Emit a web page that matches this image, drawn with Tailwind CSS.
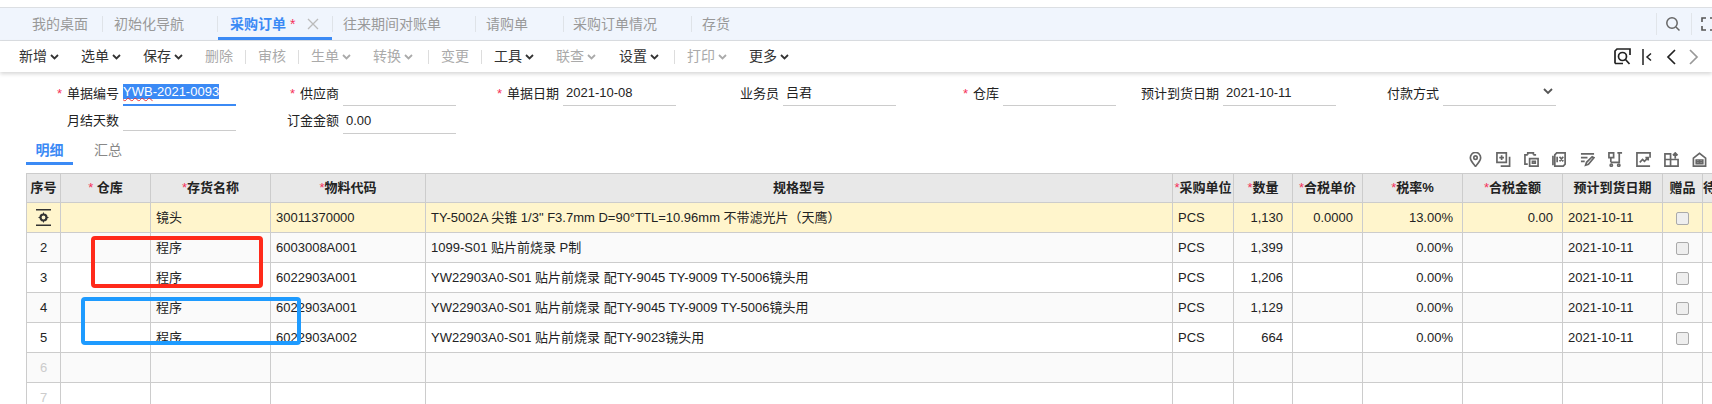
<!DOCTYPE html>
<html lang="zh-CN">
<head>
  <meta charset="UTF-8" />
  <title>采购订单</title>
  <script src="https://cdn.jsdelivr.net/npm/@tailwindcss/browser@4"></script>
</head>
<body class="relative h-[404px] overflow-hidden bg-white font-['Liberation_Sans','Noto_Sans_CJK_SC',sans-serif] text-[13px] text-[#222]">

  <!-- tab bar -->
  <div class="mt-[7px] flex h-[34px] items-center overflow-hidden border-y border-[#dcdfe3] bg-[#f0f5fd] pl-[21px] text-[14px] text-[#999]">
    <span class="pl-[11px] pr-[14px]">我的桌面</span>
    <i class="h-4 w-px bg-[#dfe3e8]"></i>
    <span class="pl-[11px] pr-[33px]">初始化导航</span>
    <i class="h-4 w-px bg-[#dfe3e8]"></i>
    <div class="flex h-[32px] w-[114px] items-center border-b-[3px] border-[#3b8af5] pl-[12px] pt-[3px] font-bold text-[#3b8af5]">
      <span>采购订单</span><span class="ml-1 font-normal text-[#f5305a]">*</span>
      <svg class="ml-[12px]" width="12" height="12" viewBox="0 0 12 12" fill="none" stroke="#bbb" stroke-width="1.3"><path d="M1 1l10 10M11 1L1 11"/></svg>
    </div>
    <i class="h-4 w-px bg-[#dfe3e8]"></i>
    <span class="pl-[10px] pr-[34px]">往来期间对账单</span>
    <i class="h-4 w-px bg-[#dfe3e8]"></i>
    <span class="pl-[10px] pr-[35px]">请购单</span>
    <i class="h-4 w-px bg-[#dfe3e8]"></i>
    <span class="pl-[9px] pr-[34px]">采购订单情况</span>
    <i class="h-4 w-px bg-[#dfe3e8]"></i>
    <span class="pl-[10px]">存货</span>
    <i class="ml-auto h-[22px] w-px bg-[#e1e5ea]"></i>
    <svg class="ml-[8px] shrink-0" width="16" height="16" viewBox="0 0 16 16" fill="none" stroke="#666" stroke-width="1.5"><circle cx="7" cy="7" r="5.2"/><path d="M11 11l3.5 3.5"/></svg>
    <i class="ml-[10px] h-[22px] w-px bg-[#e1e5ea]"></i>
    <svg class="ml-[9px] mr-[-3px] shrink-0" width="14" height="14" viewBox="0 0 14 14" fill="none" stroke="#555" stroke-width="1.6"><path d="M1 5V1h4M9 1h4v4M13 9v4H9M5 13H1V9"/></svg>
  </div>

  <!-- toolbar -->
  <div class="relative flex h-[31px] items-center pl-[19px] pr-[13px] text-[14px] text-[#333] shadow-[0_2px_4px_rgba(0,0,0,0.16)]">
    <span>新增</span><svg class="ml-[3px]" width="9" height="6" viewBox="0 0 9 6" fill="none" stroke="#333" stroke-width="1.8"><path d="M1 1l3.5 3.5L8 1"/></svg>
    <span class="ml-[22px]">选单</span><svg class="ml-[3px]" width="9" height="6" viewBox="0 0 9 6" fill="none" stroke="#333" stroke-width="1.8"><path d="M1 1l3.5 3.5L8 1"/></svg>
    <span class="ml-[22px]">保存</span><svg class="ml-[3px]" width="9" height="6" viewBox="0 0 9 6" fill="none" stroke="#333" stroke-width="1.8"><path d="M1 1l3.5 3.5L8 1"/></svg>
    <span class="ml-[22px] text-[#aaa]">删除</span>
    <i class="mx-3 h-[14px] w-px bg-[#ddd]"></i>
    <span class="text-[#aaa]">审核</span>
    <i class="mx-3 h-[14px] w-px bg-[#ddd]"></i>
    <span class="text-[#aaa]">生单</span><svg class="ml-[3px]" width="9" height="6" viewBox="0 0 9 6" fill="none" stroke="#aaa" stroke-width="1.8"><path d="M1 1l3.5 3.5L8 1"/></svg>
    <span class="ml-[22px] text-[#aaa]">转换</span><svg class="ml-[3px]" width="9" height="6" viewBox="0 0 9 6" fill="none" stroke="#aaa" stroke-width="1.8"><path d="M1 1l3.5 3.5L8 1"/></svg>
    <i class="mx-3 ml-[15px] h-[14px] w-px bg-[#ddd]"></i>
    <span class="text-[#aaa]">变更</span>
    <i class="mx-3 h-[14px] w-px bg-[#ddd]"></i>
    <span>工具</span><svg class="ml-[3px]" width="9" height="6" viewBox="0 0 9 6" fill="none" stroke="#333" stroke-width="1.8"><path d="M1 1l3.5 3.5L8 1"/></svg>
    <span class="ml-[22px] text-[#aaa]">联查</span><svg class="ml-[3px]" width="9" height="6" viewBox="0 0 9 6" fill="none" stroke="#aaa" stroke-width="1.8"><path d="M1 1l3.5 3.5L8 1"/></svg>
    <span class="ml-[23px]">设置</span><svg class="ml-[3px]" width="9" height="6" viewBox="0 0 9 6" fill="none" stroke="#333" stroke-width="1.8"><path d="M1 1l3.5 3.5L8 1"/></svg>
    <i class="mx-3 ml-[15px] h-[14px] w-px bg-[#ddd]"></i>
    <span class="text-[#aaa]">打印</span><svg class="ml-[3px]" width="9" height="6" viewBox="0 0 9 6" fill="none" stroke="#aaa" stroke-width="1.8"><path d="M1 1l3.5 3.5L8 1"/></svg>
    <span class="ml-[22px]">更多</span><svg class="ml-[3px]" width="9" height="6" viewBox="0 0 9 6" fill="none" stroke="#333" stroke-width="1.8"><path d="M1 1l3.5 3.5L8 1"/></svg>
    <!-- record nav -->
    <svg class="ml-auto" width="17" height="17" viewBox="0 0 17 17" fill="none" stroke="#222" stroke-width="1.7"><path d="M1 15.500V3l2-2h13v6M1 15.500h8"/><circle cx="8.500" cy="8.500" r="4"/><path d="M11.500 11.500l4 4.500"/></svg>
    <svg class="ml-[11px]" width="10" height="16" viewBox="0 0 10 16" fill="none" stroke="#222" stroke-width="1.500"><path d="M1 0v16M9 4.500L5 8l4 3.500"/></svg>
    <svg class="ml-[14px]" width="10" height="16" viewBox="0 0 10 16" fill="none" stroke="#222" stroke-width="1.700"><path d="M9 1L2 8l7 7"/></svg>
    <svg class="ml-[13px]" width="10" height="16" viewBox="0 0 10 16" fill="none" stroke="#999" stroke-width="1.700"><path d="M1 1l7 7-7 7"/></svg>
  </div>

  <!-- header form -->
  <div class="ml-4 mt-[10px] grid grid-cols-[repeat(7,220px)] leading-[28px]">
    <div class="flex h-[24px] items-center"><label class="w-[103px] text-right"><span class="mr-[5px] text-[#f5305a]">*</span>单据编号</label><div class="ml-1 h-[23px] w-[113px] border-b-[2px] border-[#3b8af5] leading-[18px]"><span class="bg-[#3b8af5] text-white"><span class="underline decoration-[#e33] decoration-1 decoration-wavy">YWB</span>-2021-0093</span></div></div>
    <div class="flex h-[24px] items-center"><label class="w-[103px] text-right"><span class="mr-[5px] text-[#f5305a]">*</span>供应商</label><div class="ml-1 h-[23px] w-[113px] border-b border-[#ccc]"></div></div>
    <div class="flex h-[24px] items-center"><label class="w-[103px] text-right"><span class="mr-[5px] text-[#f5305a]">*</span>单据日期</label><div class="ml-1 h-[23px] w-[113px] border-b border-[#ccc] pl-[3px] leading-[20px]">2021-10-08</div></div>
    <div class="flex h-[24px] items-center"><label class="w-[103px] text-right">业务员</label><div class="ml-1 h-[23px] w-[113px] border-b border-[#ccc] pl-[3px] leading-[20px]">吕君</div></div>
    <div class="flex h-[24px] items-center"><label class="w-[103px] text-right"><span class="mr-[5px] text-[#f5305a]">*</span>仓库</label><div class="ml-1 h-[23px] w-[113px] border-b border-[#ccc]"></div></div>
    <div class="flex h-[24px] items-center"><label class="w-[103px] text-right">预计到货日期</label><div class="ml-1 h-[23px] w-[113px] border-b border-[#ccc] pl-[3px] leading-[20px]">2021-10-11</div></div>
    <div class="flex h-[24px] items-center"><label class="w-[103px] text-right">付款方式</label><div class="ml-1 flex h-[23px] w-[113px] justify-end border-b border-[#ccc] pr-[3px] pt-[5px]"><svg width="10" height="7" viewBox="0 0 10 7" fill="none" stroke="#555" stroke-width="1.800"><path d="M1 1l4 4 4-4"/></svg></div></div>
    <div class="mt-[2px] flex h-[25px] items-center"><label class="w-[103px] text-right">月结天数</label><div class="ml-1 h-[21px] w-[113px] border-b border-[#ccc]"></div></div>
    <div class="mt-[2px] flex h-[25px] items-start"><label class="w-[103px] text-right leading-[25px]">订金金额</label><div class="ml-1 h-[26px] w-[113px] border-b border-[#ccc] pl-[3px] leading-[25px]">0.00</div></div>
  </div>

  <!-- detail tabs + action icons -->
  <div class="mt-[5px] flex h-[27px] pl-[26px] text-[14px]">
    <div class="h-[27px] w-[47px] border-b-[3px] border-[#3b8af5] pt-[2px] text-center font-bold leading-[20px] text-[#3b8af5]">明细</div>
    <div class="ml-[21px] pt-[2px] leading-[20px] text-[#888]">汇总</div>
    <div class="ml-auto mt-[14px] flex h-[15px] gap-[13px] pr-[5px] [&>svg]:h-[15px] [&>svg]:w-[15px]">
      <svg viewBox="0 0 16 16" fill="none" stroke="#666" stroke-width="1.800"><path d="M8 15.500C5 11.500 2.500 9 2.500 6a5.500 5.500 0 0111 0c0 3-2.500 5.500-5.500 9.500z"/><circle cx="8" cy="6" r="1.800"/></svg>
      <svg viewBox="0 0 16 16" fill="none" stroke="#666" stroke-width="1.800"><path d="M1 1h10v10H1zM14.500 5v10H5M6 3.500v5M3.500 6h5"/></svg>
      <svg viewBox="0 0 16 16" fill="none" stroke="#666" stroke-width="1.800"><path d="M4 13H1V3h3M4 3V1h6v2M12 4V3h-2M6 7h9v8H6zM9 10h3v2H9z"/></svg>
      <svg viewBox="0 0 16 16" fill="none" stroke="#666" stroke-width="1.800"><path d="M3 15V3l2-2h9v12l-2 2zM12 5l-4 5M8 5l4 5M5.500 5v6M1 4v10"/></svg>
      <svg viewBox="0 0 16 16" fill="none" stroke="#666" stroke-width="1.800"><path d="M1 2h14M1 6h7M1 10h4M6 14l1-3 6-6 2 1-6 7z"/></svg>
      <svg viewBox="0 0 16 16" fill="none" stroke="#666" stroke-width="1.800"><path d="M1 1h5v5H1zM10 1h2v10H3M15 1h-3M3 7v4"/><circle cx="3.500" cy="14" r="1.200"/><circle cx="11.500" cy="14" r="1.200"/></svg>
      <svg viewBox="0 0 16 16" fill="none" stroke="#666" stroke-width="1.800"><path d="M15 6V1H1v14h14M4 11l3-3 2 2 4-4M10 6h3v3"/></svg>
      <svg viewBox="0 0 16 16" fill="none" stroke="#666" stroke-width="1.800"><path d="M1 2h6v6H1zM1 8h6v7H1zM7 8h8v7H7zM12 7V1M9.500 3.500L12 1l2.500 2.500"/></svg>
      <svg viewBox="0 0 16 16" fill="none" stroke="#666" stroke-width="1.800"><path d="M1.500 6.500L8 1.500l6.500 5V15h-13zM4.500 8.500h7v4h-7zM8 8.500v4M4.500 10.500h7"/></svg>
    </div>
  </div>

  <!-- detail grid -->
  <div class="ml-[26px] mt-[8px] overflow-hidden">
    <table class="w-[1746px] table-fixed border-collapse border border-[#ccc] [&_td]:overflow-hidden [&_td]:whitespace-nowrap [&_td]:border [&_td]:border-[#ccc] [&_td]:px-[5px] [&_th]:overflow-hidden [&_th]:whitespace-nowrap [&_th]:border [&_th]:border-[#ccc] [&_th]:p-0 [&_th_span]:font-normal [&_th_span]:text-[#f5305a]">
      <colgroup>
        <col class="w-[34px]" /><col class="w-[90px]" /><col class="w-[120px]" /><col class="w-[155px]" /><col class="w-[747px]" />
        <col class="w-[61px]" /><col class="w-[59px]" /><col class="w-[70px]" /><col class="w-[100px]" /><col class="w-[100px]" />
        <col class="w-[100px]" /><col class="w-[40px]" /><col class="w-[70px]" />
      </colgroup>
      <thead>
        <tr class="h-[29px] bg-[#e8e8e8] font-bold">
          <th>序号</th><th><span>*</span> 仓库</th><th><span>*</span>存货名称</th><th><span>*</span>物料代码</th><th>规格型号</th>
          <th><span>*</span>采购单位</th><th><span>*</span>数量</th><th><span>*</span>合税单价</th><th><span>*</span>税率%</th><th><span>*</span>合税金额</th>
          <th>预计到货日期</th><th>赠品</th><th class="pl-[4px] text-left">待收货数量</th>
        </tr>
      </thead>
      <tbody>
        <tr class="h-[30px] bg-[#fff5cc]">
          <td class="text-center"><svg class="mx-auto" width="15" height="17" viewBox="0 0 15 17" fill="#333"><path d="M0 0h15v1.500H0zM0 15.500h15V17H0z"/><circle cx="7.500" cy="8.500" r="3" fill="none" stroke="#333" stroke-width="2.200"/><path d="M7 3.500h1v2H7zM7 11.500h1v2H7zM2.500 8h2v1h-2zM10.500 8h2v1h-2z"/></svg></td>
          <td></td><td>镜头</td><td>30011370000</td><td>TY-5002A 尖锥 1/3" F3.7mm D=90°TTL=10.96mm 不带滤光片（天鹰）</td>
          <td class="pl-[6px]">PCS</td><td class="pr-[9px]! text-right">1,130</td><td class="pr-[9px]! text-right">0.0000</td><td class="pr-[9px]! text-right">13.00%</td><td class="pr-[9px]! text-right">0.00</td>
          <td>2021-10-11</td><td class="text-center"><i class="mx-auto mt-[2px] block h-[13px] w-[13px] rounded-[2px] border border-[#aaa] bg-[#eee]"></i></td><td></td>
        </tr>
        <tr class="h-[30px] bg-[#fafafa]">
          <td class="text-center">2</td>
          <td></td><td>程序</td><td>6003008A001</td><td>1099-S01 贴片前烧录 P制</td>
          <td class="pl-[6px]">PCS</td><td class="pr-[9px]! text-right">1,399</td><td></td><td class="pr-[9px]! text-right">0.00%</td><td></td>
          <td>2021-10-11</td><td class="text-center"><i class="mx-auto mt-[2px] block h-[13px] w-[13px] rounded-[2px] border border-[#aaa] bg-[#eee]"></i></td><td></td>
        </tr>
        <tr class="h-[30px] bg-white">
          <td class="text-center">3</td>
          <td></td><td>程序</td><td>6022903A001</td><td>YW22903A0-S01 贴片前烧录 配TY-9045 TY-9009 TY-5006镜头用</td>
          <td class="pl-[6px]">PCS</td><td class="pr-[9px]! text-right">1,206</td><td></td><td class="pr-[9px]! text-right">0.00%</td><td></td>
          <td>2021-10-11</td><td class="text-center"><i class="mx-auto mt-[2px] block h-[13px] w-[13px] rounded-[2px] border border-[#aaa] bg-[#eee]"></i></td><td></td>
        </tr>
        <tr class="h-[30px] bg-[#fafafa]">
          <td class="text-center">4</td>
          <td></td><td>程序</td><td>6022903A001</td><td>YW22903A0-S01 贴片前烧录 配TY-9045 TY-9009 TY-5006镜头用</td>
          <td class="pl-[6px]">PCS</td><td class="pr-[9px]! text-right">1,129</td><td></td><td class="pr-[9px]! text-right">0.00%</td><td></td>
          <td>2021-10-11</td><td class="text-center"><i class="mx-auto mt-[2px] block h-[13px] w-[13px] rounded-[2px] border border-[#aaa] bg-[#eee]"></i></td><td></td>
        </tr>
        <tr class="h-[30px] bg-white">
          <td class="text-center">5</td>
          <td></td><td>程序</td><td>6022903A002</td><td>YW22903A0-S01 贴片前烧录 配TY-9023镜头用</td>
          <td class="pl-[6px]">PCS</td><td class="pr-[9px]! text-right">664</td><td></td><td class="pr-[9px]! text-right">0.00%</td><td></td>
          <td>2021-10-11</td><td class="text-center"><i class="mx-auto mt-[2px] block h-[13px] w-[13px] rounded-[2px] border border-[#aaa] bg-[#eee]"></i></td><td></td>
        </tr>
        <tr class="h-[30px] bg-[#fafafa]"><td class="text-center text-[#ccc]">6</td><td></td><td></td><td></td><td></td><td></td><td></td><td></td><td></td><td></td><td></td><td></td><td></td></tr>
        <tr class="h-[30px] bg-white"><td class="text-center text-[#ccc]">7</td><td></td><td></td><td></td><td></td><td></td><td></td><td></td><td></td><td></td><td></td><td></td><td></td></tr>
      </tbody>
    </table>
  </div>

  <!-- hand-drawn annotation boxes over the grid -->
  <div class="absolute left-[91px] top-[236px] h-[52px] w-[172px] rounded-[4px] border-[4px] border-[#ff2a1a]"></div>
  <div class="absolute left-[81px] top-[297px] h-[48px] w-[220px] rounded-[4px] border-[4px] border-[#1e9bff]"></div>
</body>
</html>
